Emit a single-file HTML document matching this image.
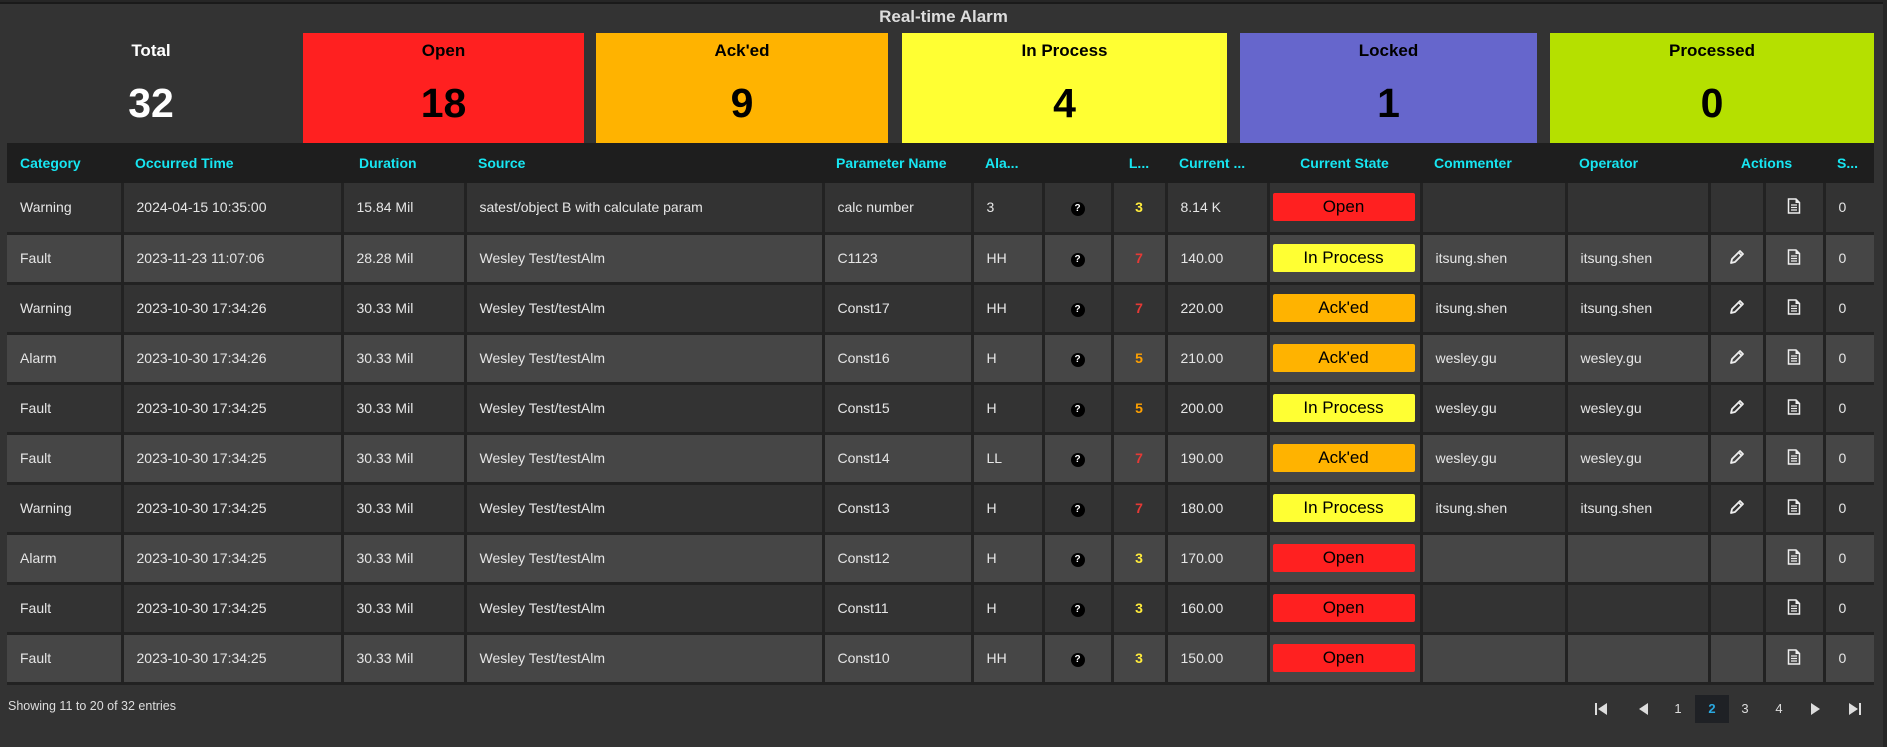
<!DOCTYPE html>
<html><head><meta charset="utf-8"><style>
*{box-sizing:border-box;margin:0;padding:0}
body{width:1887px;height:747px;background:#262626;font-family:"Liberation Sans",sans-serif;overflow:hidden;position:relative}
#panel{position:absolute;left:0;top:2px;width:1883px;height:745px;background:#333;border-top:2px solid #1a1a1a}
#title{position:absolute;left:0;width:1887px;top:7px;text-align:center;color:#ddd;font-weight:bold;font-size:17px}
.card{position:absolute;top:33px;height:110px;text-align:center;color:#000}
.card .l{position:absolute;top:8px;left:0;right:0;font-size:17px;font-weight:bold}
.card .n{position:absolute;top:70px;left:0;right:0;font-size:41px;font-weight:bold;line-height:0}
table{position:absolute;left:7px;top:143px;border-collapse:collapse;table-layout:fixed;width:1867px}
td,th{overflow:hidden;white-space:nowrap;font-size:14px}
th{height:40px;background:#1e1e1e;color:#17e6f2;text-align:left;padding-left:13px;font-weight:bold;font-size:14px}
td{height:50px;border:3px solid #222;color:#e6e6e6;padding-left:13px}
#tb tr:first-child td{border-top:none}
#tb tr:nth-child(odd) td{background:#333}
#tb tr:nth-child(even) td{background:#464646}
td:first-child{border-left:none}
td:last-child{border-right:none}
.c{text-align:center;padding-left:0}
.q{display:inline-block;width:14px;height:14px;border-radius:50%;background:#000;color:#fff;font-size:10px;font-weight:bold;line-height:14px;text-align:center}
.b{display:block;width:142px;height:28px;margin-left:3px;border-radius:2px;color:#000;font-size:17px;line-height:28px;text-align:center}
.y3{color:#ffeb3b;font-weight:bold}.r7{color:#e53935;font-weight:bold}.o5{color:#ffa000;font-weight:bold}
#foot{position:absolute;left:8px;top:699px;color:#ddd;font-size:12.5px}
.pg{position:absolute;top:695px;height:28px;width:34px;text-align:center;line-height:28px;color:#ddd;font-size:13px}
</style></head><body>
<div id="panel"></div>
<div id="title">Real-time Alarm</div>
<div class="card" style="left:7px;width:288px;color:#fff"><div class="l">Total</div><div class="n">32</div></div>
<div class="card" style="left:303px;width:281px;background:#ff2020"><div class="l">Open</div><div class="n">18</div></div>
<div class="card" style="left:596px;width:292px;background:#ffb300"><div class="l">Ack'ed</div><div class="n">9</div></div>
<div class="card" style="left:902px;width:325px;background:#ffff33"><div class="l">In Process</div><div class="n">4</div></div>
<div class="card" style="left:1240px;width:297px;background:#6666cc"><div class="l">Locked</div><div class="n">1</div></div>
<div class="card" style="left:1550px;width:324px;background:#b5e000"><div class="l">Processed</div><div class="n">0</div></div>
<table>
<colgroup><col style="width:115px"><col style="width:220px"><col style="width:123px"><col style="width:358px"><col style="width:149px"><col style="width:71px"><col style="width:69px"><col style="width:54px"><col style="width:102px"><col style="width:153px"><col style="width:145px"><col style="width:143px"><col style="width:55px"><col style="width:60px"><col style="width:50px"></colgroup>
<thead><tr><th>Category</th><th>Occurred Time</th><th style="padding-left:17px">Duration</th><th>Source</th><th>Parameter Name</th><th>Ala...</th><th></th><th class="c">L...</th><th>Current ...</th><th class="c">Current State</th><th>Commenter</th><th>Operator</th><th colspan="2" class="c">Actions</th><th>S...</th></tr></thead>
<tbody id="tb">
</tbody></table>
<div id="foot">Showing 11 to 20 of 32 entries</div>
<svg style="position:absolute;left:1594px;top:702px" width="14" height="14"><rect x="1" y="1" width="2" height="12" fill="#ddd"/><path d="M13 1 L4 7 L13 13Z" fill="#ddd"/></svg>
<svg style="position:absolute;left:1637px;top:702px" width="12" height="14"><path d="M11 1 L2 7 L11 13Z" fill="#ddd"/></svg>
<div class="pg" style="left:1661px">1</div>
<div class="pg" style="left:1695px;background:#1f2125;color:#2aa8e0;font-weight:bold">2</div>
<div class="pg" style="left:1728px">3</div>
<div class="pg" style="left:1762px">4</div>
<svg style="position:absolute;left:1810px;top:702px" width="12" height="14"><path d="M1 1 L10 7 L1 13Z" fill="#ddd"/></svg>
<svg style="position:absolute;left:1848px;top:702px" width="14" height="14"><path d="M1 1 L10 7 L1 13Z" fill="#ddd"/><rect x="11" y="1" width="2" height="12" fill="#ddd"/></svg>
<script>
const rows=[
["Warning","2024-04-15 10:35:00","15.84 Mil","satest/object B with calculate param","calc number","3","y3","3","8.14 K","Open","","",0],
["Fault","2023-11-23 11:07:06","28.28 Mil","Wesley Test/testAlm","C1123","HH","r7","7","140.00","In Process","itsung.shen","itsung.shen",1],
["Warning","2023-10-30 17:34:26","30.33 Mil","Wesley Test/testAlm","Const17","HH","r7","7","220.00","Ack'ed","itsung.shen","itsung.shen",1],
["Alarm","2023-10-30 17:34:26","30.33 Mil","Wesley Test/testAlm","Const16","H","o5","5","210.00","Ack'ed","wesley.gu","wesley.gu",1],
["Fault","2023-10-30 17:34:25","30.33 Mil","Wesley Test/testAlm","Const15","H","o5","5","200.00","In Process","wesley.gu","wesley.gu",1],
["Fault","2023-10-30 17:34:25","30.33 Mil","Wesley Test/testAlm","Const14","LL","r7","7","190.00","Ack'ed","wesley.gu","wesley.gu",1],
["Warning","2023-10-30 17:34:25","30.33 Mil","Wesley Test/testAlm","Const13","H","r7","7","180.00","In Process","itsung.shen","itsung.shen",1],
["Alarm","2023-10-30 17:34:25","30.33 Mil","Wesley Test/testAlm","Const12","H","y3","3","170.00","Open","","",0],
["Fault","2023-10-30 17:34:25","30.33 Mil","Wesley Test/testAlm","Const11","H","y3","3","160.00","Open","","",0],
["Fault","2023-10-30 17:34:25","30.33 Mil","Wesley Test/testAlm","Const10","HH","y3","3","150.00","Open","","",0]];
const col={"Open":"#ff2020","Ack'ed":"#ffb300","In Process":"#ffff33"};
const pencil='<svg width="16" height="16" viewBox="0 0 16 16"><path d="M11 2 L14 5 L6 13 L2 14 L3 10Z" fill="none" stroke="#eee" stroke-width="1.8" stroke-linejoin="round"/><path d="M9.5 3.5 L12.5 6.5" stroke="#eee" stroke-width="1.5"/></svg>';
const doc='<svg width="14" height="16" viewBox="0 0 14 16"><path d="M1.5 1 H9 L12.5 4.5 V15 H1.5Z" fill="none" stroke="#eee" stroke-width="1.5"/><path d="M9 1 V4.5 H12.5" fill="#eee" stroke="#eee"/><path d="M4 7H10M4 9.5H10M4 12H10" stroke="#eee" stroke-width="1.3"/></svg>';
let h='';
for(const r of rows){h+=`<tr><td>${r[0]}</td><td>${r[1]}</td><td>${r[2]}</td><td>${r[3]}</td><td>${r[4]}</td><td>${r[5]}</td><td class="c"><span class="q">?</span></td><td class="c ${r[6]}">${r[7]}</td><td>${r[8]}</td><td style="padding-left:0"><span class="b" style="background:${col[r[9]]}">${r[9]}</span></td><td>${r[10]}</td><td>${r[11]}</td><td class="c">${r[12]?pencil:''}</td><td class="c">${doc}</td><td>0</td></tr>`;}
document.getElementById('tb').innerHTML=h;
</script>
</body></html>
